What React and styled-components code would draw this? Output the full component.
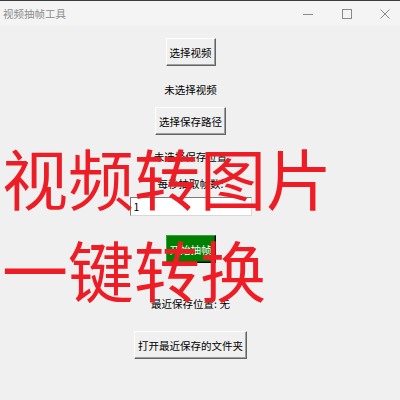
import React from 'react';
import styled, { createGlobalStyle } from 'styled-components';

const GlobalStyle = createGlobalStyle`
  html, body {
    margin: 0;
    padding: 0;
    background: #f0f0f0;
  }
  body {
    font-family: "Noto Sans CJK SC", "Microsoft YaHei", sans-serif;
  }
`;

const Window = styled.div`
  position: relative;
  width: 400px;
  height: 400px;
  overflow: hidden;
  box-sizing: border-box;
  background: #f0f0f0;
  border-top: 1px solid #3c3c3c;
`;

const TitleBar = styled.div`
  display: flex;
  align-items: center;
  height: 25px;
  padding-left: 3px;
  background: #f4f4f4;
`;

const Title = styled.span`
  flex: 1;
  font-size: 10.5px;
  color: #8c8c8c;
`;

const Controls = styled.div`
  display: flex;
  align-items: center;
  gap: 18.5px;
  padding-right: 5px;
`;

const Control = styled.div`
  width: 20px;
  height: 20px;
  display: flex;
  align-items: center;
  justify-content: center;
`;

const Content = styled.div`
  display: flex;
  flex-direction: column;
  align-items: center;
  padding-right: 19px;
`;

const Button = styled.button`
  margin-top: ${(p) => p.$mt}px;
  height: 28px;
  padding: 0 3px;
  font-family: "Noto Sans CJK SC", sans-serif;
  font-size: 10.5px;
  color: ${(p) => (p.$primary ? '#ffffff' : '#000000')};
  background: ${(p) => (p.$primary ? '#008000' : '#f0f0f0')};
  border: 1px solid;
  border-color: ${(p) => (p.$primary ? '#3aa03a #000 #000 #3aa03a' : '#ffffff #646464 #646464 #ffffff')};
  box-shadow: inset -1px -1px 0 ${(p) => (p.$primary ? '#005000' : '#a0a0a0')};
  cursor: pointer;
`;

const Label = styled.div`
  margin-top: ${(p) => p.$mt}px;
  height: 15px;
  line-height: 15px;
  font-size: 10.5px;
  color: #000;
`;

const Entry = styled.input`
  margin-top: ${(p) => p.$mt}px;
  width: 122px;
  height: 19px;
  box-sizing: border-box;
  padding: 0 3px;
  font-family: "Noto Sans CJK SC", sans-serif;
  font-size: 10.5px;
  background: #ffffff;
  border: 1px solid #7a7a7a;
  border-right-color: #d8d8d8;
  border-bottom-color: #d8d8d8;
  outline: none;
`;

const Overlay = styled.div`
  position: absolute;
  left: 2px;
  top: 129px;
  font-family: "Noto Sans CJK SC", sans-serif;
  font-size: 66px;
  line-height: 92px;
  font-weight: 400;
  color: #ee1c25;
  white-space: nowrap;
  pointer-events: none;
`;

function MinIcon() {
  return (
    <svg width="12" height="12" viewBox="0 0 12 12">
      <line x1="1" y1="6.5" x2="11" y2="6.5" stroke="#8a8a8a" strokeWidth="1" />
    </svg>
  );
}

function MaxIcon() {
  return (
    <svg width="12" height="12" viewBox="0 0 12 12">
      <rect x="1.5" y="1.5" width="9" height="9" fill="none" stroke="#8a8a8a" strokeWidth="1" />
    </svg>
  );
}

function CloseIcon() {
  return (
    <svg width="12" height="12" viewBox="0 0 12 12">
      <path d="M1.5 1.5 L10.5 10.5 M10.5 1.5 L1.5 10.5" stroke="#8a8a8a" strokeWidth="1" />
    </svg>
  );
}

export default function App() {
  return (
    <Window>
      <GlobalStyle />
      <TitleBar>
        <Title>视频抽帧工具</Title>
        <Controls>
          <Control><MinIcon /></Control>
          <Control><MaxIcon /></Control>
          <Control><CloseIcon /></Control>
        </Controls>
      </TitleBar>
      <Content>
        <Button $mt={12}>选择视频</Button>
        <Label $mt={16}>未选择视频</Label>
        <Button $mt={10}>选择保存路径</Button>
        <Label $mt={14}>未选择保存位置</Label>
        <Label $mt={12}>每秒抽取帧数:</Label>
        <Entry $mt={6} defaultValue="1" />
        <Button $mt={19} $primary>开始抽帧</Button>
        <Label $mt={33}>最近保存位置: 无</Label>
        <Button $mt={20}>打开最近保存的文件夹</Button>
      </Content>
      <Overlay>
        视频转图片
        <br />
        一键转换
      </Overlay>
    </Window>
  );
}
